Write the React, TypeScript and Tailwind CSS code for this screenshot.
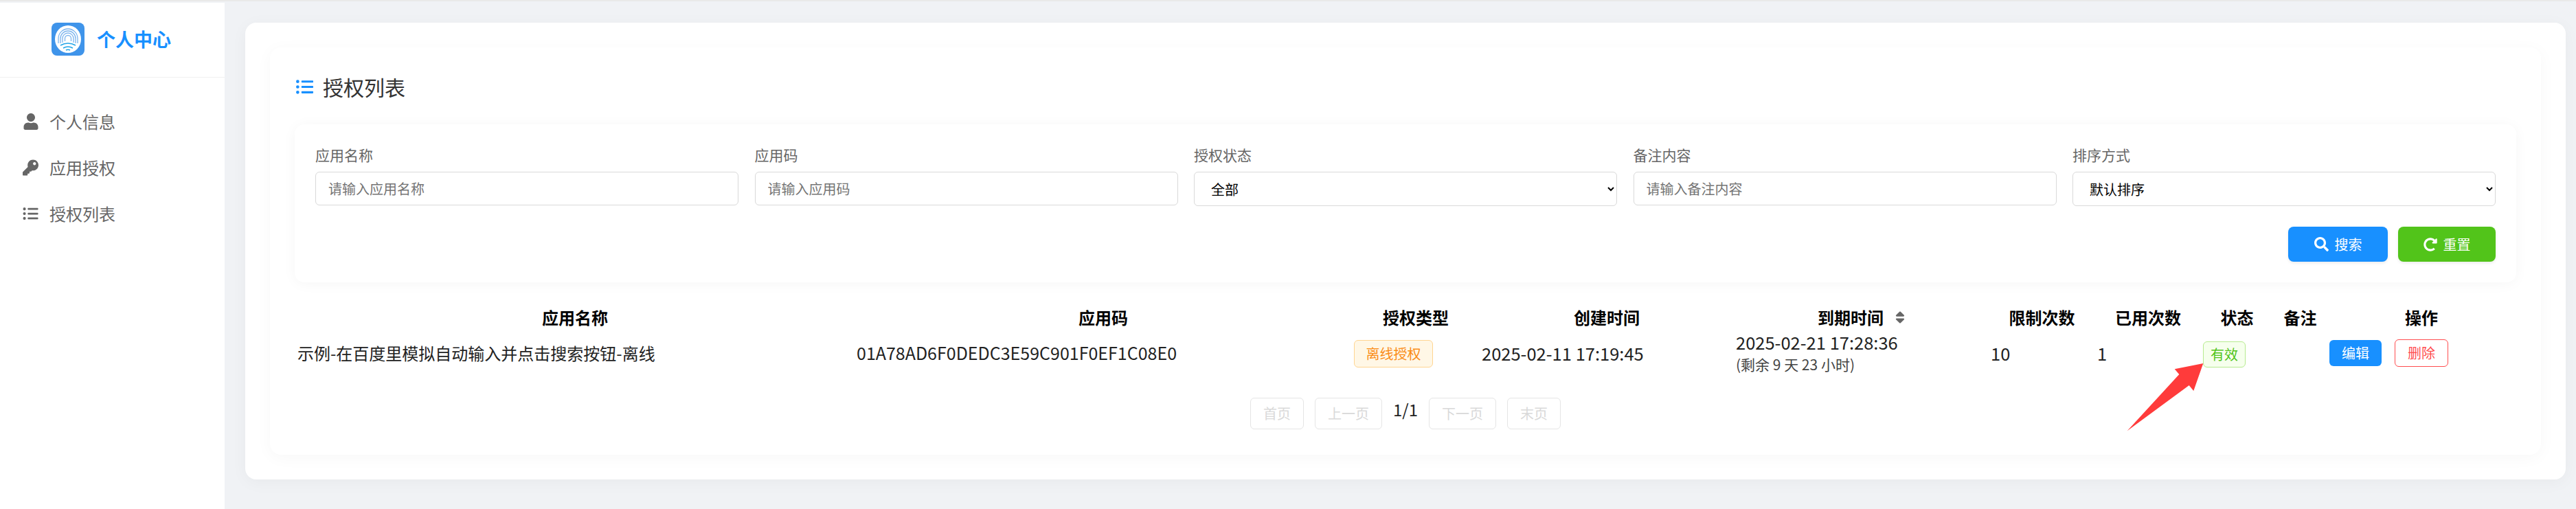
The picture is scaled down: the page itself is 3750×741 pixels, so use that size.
import React from 'react';
import { FaUser, FaKey, FaListUl, FaSearch, FaRedoAlt, FaSort } from 'react-icons/fa';

const FONT = "font-['Noto_Sans_CJK_SC','Microsoft_YaHei',sans-serif]";

const Logo = () => (
  <svg width="48" height="48" viewBox="0 0 48 48" fill="none">
    <rect width="48" height="48" rx="8" fill="#3f94ea" />
    <ellipse cx="24" cy="24" rx="19" ry="20" fill="#fff" />
    <g stroke="#7cb4ee" strokeWidth="1.3" fill="none">
      <path d="M19.5 27v-4a4.5 4.5 0 0 1 9 0v4" />
      <path d="M16 29v-6a8 8 0 0 1 16 0v6" />
      <path d="M13 30v-7a11 11 0 0 1 22 0v7" />
      <path d="M10 30v-7a14 14 0 0 1 28 0v7" />
    </g>
    <g stroke="#23a5e8" strokeWidth="1.6" fill="none">
      <path d="M13 33q11-6 22 0" />
      <path d="M17 37q7-4 14 0" />
      <path d="M21 40q3-1.5 6 0" />
    </g>
  </svg>
);

const menu = [
  { label: '个人信息', icon: <FaUser className="w-[22px] h-[24px]" /> },
  { label: '应用授权', icon: <FaKey className="w-[23px] h-[24px]" /> },
  { label: '授权列表', icon: <FaListUl className="w-[23px] h-[22px]" /> }
];

const Sidebar = () => (
  <aside className="w-[327px] shrink-0 mt-[2px] bg-white">
    <div className="h-[109px] flex items-center pl-[75px] gap-[18px] border-b border-[#f0f0f0] pb-[2px]">
      <Logo />
      <span className="text-[27px] font-bold text-[#1890ff]">个人中心</span>
    </div>
    <nav className="pt-[30px]">
      {menu.map((item) => (
        <div key={item.label} className="h-[67px] flex items-center pl-[33px] gap-[16px] text-[#666666]">
          <span className="w-[23px] flex justify-center">{item.icon}</span>
          <span className="text-[24px]">{item.label}</span>
        </div>
      ))}
    </nav>
  </aside>
);

const fieldClass =
  'w-full h-[49px] px-[18px] text-[20px] text-black bg-white border border-[#d9d9d9] rounded-[6px] placeholder:text-[#757575]';

const TextField = ({ label, placeholder }: { label: string; placeholder: string }) => (
  <div>
    <div className="text-[21px] leading-[28px] mb-[11px] text-[#666666]">{label}</div>
    <input className={fieldClass} placeholder={placeholder} readOnly />
  </div>
);

const SelectField = ({ label, value }: { label: string; value: string }) => (
  <div>
    <div className="text-[21px] leading-[28px] mb-[11px] text-[#666666]">{label}</div>
    <select className={`${fieldClass} h-[50px] pl-[20px] pr-[20px]`} defaultValue={value}>
      <option>{value}</option>
    </select>
  </div>
);

const FilterCard = () => (
  <div className="rounded-[14px] bg-white p-[30px] shadow-[0_2px_20px_rgba(0,0,0,0.04)]">
    <div className="grid grid-cols-5 gap-x-[23.5px]">
      <TextField label="应用名称" placeholder="请输入应用名称" />
      <TextField label="应用码" placeholder="请输入应用码" />
      <SelectField label="授权状态" value="全部" />
      <TextField label="备注内容" placeholder="请输入备注内容" />
      <SelectField label="排序方式" value="默认排序" />
    </div>
    <div className="mt-[30px] flex justify-end gap-[15px]">
      <button className="w-[145px] h-[51px] rounded-[8px] bg-[#1890ff] text-white text-[20px] flex items-center justify-center gap-[9px] shadow-[0_2px_4px_rgba(0,0,0,0.08)]">
        <FaSearch className="w-[21px] h-[21px]" />
        搜索
      </button>
      <button className="w-[142px] h-[51px] rounded-[8px] bg-[#52c41a] text-white text-[20px] flex items-center justify-center gap-[9px] shadow-[0_2px_4px_rgba(0,0,0,0.08)]">
        <FaRedoAlt className="w-[20px] h-[20px]" />
        重置
      </button>
    </div>
  </div>
);

const Table = () => (
  <table className="mt-[32px] ml-[1px] w-[3232px] table-fixed border-collapse text-[25.5px] text-[#222222]">
    <colgroup>
      <col className="w-[814px]" />
      <col className="w-[724px]" />
      <col className="w-[186px]" />
      <col className="w-[370px]" />
      <col className="w-[371px]" />
      <col className="w-[155px]" />
      <col className="w-[154px]" />
      <col className="w-[105px]" />
      <col className="w-[79px]" />
      <col className="w-[274px]" />
    </colgroup>
    <thead>
      <tr className="h-[38px] text-black text-[24px]">
        <th className="px-[3px] font-bold text-center">应用名称</th>
        <th className="px-[3px] font-bold text-center">应用码</th>
        <th className="px-[3px] font-bold text-center">授权类型</th>
        <th className="px-[3px] font-bold text-center">创建时间</th>
        <th className="px-[3px] font-bold text-center">
          <span className="inline-flex items-center">
            到期时间
            <FaSort className="ml-[17px] w-[14px] h-[22px] text-[#666666]" />
          </span>
        </th>
        <th className="px-[3px] font-bold text-center">限制次数</th>
        <th className="px-[3px] font-bold text-center">已用次数</th>
        <th className="px-[3px] font-bold text-center">状态</th>
        <th className="px-[3px] font-bold text-center">备注</th>
        <th className="px-[3px] font-bold text-center">操作</th>
      </tr>
    </thead>
    <tbody>
      <tr className="h-[66px]">
        <td className="px-[3px] text-[24px]">示例-在百度里模拟自动输入并点击搜索按钮-离线</td>
        <td className="px-[3px] text-[25px]">01A78AD6F0DEDC3E59C901F0EF1C08E0</td>
        <td className="px-[3px]">
          <span className="inline-flex items-center justify-center w-[115px] h-[40px] rounded-[6px] border border-[#ffd591] bg-[#fff7e6] text-[20px] text-[#fa8c16]">
            离线授权
          </span>
        </td>
        <td className="px-[3px]">2025-02-11 17:19:45</td>
        <td className="px-[3px]">
          <div className="leading-[33px]">2025-02-21 17:28:36</div>
          <div className="leading-[33px] text-[21px] text-[#444444]">(剩余 9 天 23 小时)</div>
        </td>
        <td className="px-[3px]">10</td>
        <td className="px-[3px]">1</td>
        <td className="px-[3px]">
          <span className="inline-flex items-center justify-center w-[62px] h-[38px] rounded-[6px] border border-[#b7eb8f] bg-[#f6ffed] text-[20px] text-[#52c41a]">
            有效
          </span>
        </td>
        <td className="px-[3px]" />
        <td className="px-[3px]">
          <div className="flex items-center gap-[19px]">
            <button className="w-[76px] h-[38px] rounded-[6px] bg-[#1890ff] text-white text-[20px]">编辑</button>
            <button className="w-[78px] h-[40px] rounded-[6px] border border-[#ff4d4f] bg-white text-[#ff4d4f] text-[20px]">删除</button>
          </div>
        </td>
      </tr>
    </tbody>
  </table>
);

const pageBtn =
  'h-[46px] px-[18px] rounded-[6px] border border-[#e5e5e5] bg-white text-[20px] text-[#d9d9d9]';

const Pagination = () => (
  <div className="mt-[32px] flex items-start justify-center gap-[16px]">
    <button className={pageBtn} disabled>首页</button>
    <button className={pageBtn} disabled>上一页</button>
    <span className="text-[24px] leading-[34px] text-[#222222]">1/1</span>
    <button className={pageBtn} disabled>下一页</button>
    <button className={pageBtn} disabled>末页</button>
  </div>
);

export default function App() {
  return (
    <div className={`relative h-[741px] w-[3750px] overflow-hidden flex border-t-2 border-[#e9e9e9] bg-[#f0f2f5] ${FONT}`}>
      <Sidebar />
      <main className="ml-[30px] mt-[31px] w-[3378px] h-[665px]">
        <div className="h-full rounded-[16px] bg-white p-[36px] shadow-[0_4px_24px_rgba(0,0,0,0.04)]">
          <div className="h-[593px] rounded-[16px] bg-white px-[36px] pt-[35px] shadow-[0_4px_24px_rgba(0,0,0,0.035)]">
            <h2 className="flex items-center gap-[12px] h-[45px] mb-[32px] text-[30px] font-normal text-[#333333]">
              <FaListUl className="w-[29px] h-[25px] text-[#1890ff]" />
              授权列表
            </h2>
            <FilterCard />
            <Table />
            <Pagination />
          </div>
        </div>
      </main>
      {/* annotation arrow drawn over the status tag */}
      <svg className="absolute left-[3090px] top-[523px]" width="125" height="110" viewBox="0 0 125 110">
        <polygon points="117.3,4 75.7,12.3 82.3,20 6.7,102.3 96.7,36 103.3,44" fill="#ff3b3b" />
      </svg>
    </div>
  );
}
